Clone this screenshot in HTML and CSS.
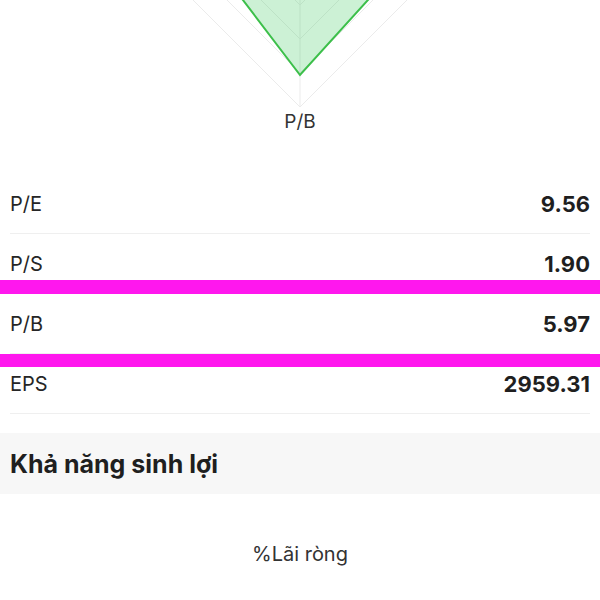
FILE: index.html
```html
<!DOCTYPE html>
<html lang="vi">
<head>
  <meta charset="UTF-8">
  <meta name="viewport" content="width=device-width, initial-scale=1.0">
  <title>Định giá</title>
  <link rel="stylesheet" href="styles.css">
</head>
<body>

  <!-- Radar chart (only the lower part is on screen) -->
  <section class="radar">
    <svg class="radar-svg" width="600" height="110" viewBox="0 0 600 110">
      <!-- grid: centre at (300,-63), 5 rings of 34px -->
      <g class="radar-grid">
        <polygon points="300,-97 334,-63 300,-29 266,-63" />
        <polygon points="300,-131 368,-63 300,5 232,-63" />
        <polygon points="300,-165 402,-63 300,39 198,-63" />
        <polygon points="300,-199 436,-63 300,73 164,-63" />
        <polygon points="300,-233 470,-63 300,107 130,-63" />
        <line x1="300" y1="-233" x2="300" y2="107" />
        <line x1="130" y1="-63" x2="470" y2="-63" />
      </g>
      <polygon class="radar-value" points="300,-163 425,-63 300,75 195,-63" />
    </svg>
    <div class="radar-label">P/B</div>
  </section>

  <!-- Valuation metrics -->
  <section class="metrics">
    <div class="metric-row">
      <span class="metric-name">P/E</span>
      <span class="metric-value">9.56</span>
    </div>
    <div class="metric-row">
      <span class="metric-name">P/S</span>
      <span class="metric-value">1.90</span>
    </div>
    <div class="metric-row highlighted">
      <span class="metric-name">P/B</span>
      <span class="metric-value">5.97</span>
    </div>
    <div class="metric-row">
      <span class="metric-name">EPS</span>
      <span class="metric-value">2959.31</span>
    </div>
  </section>

  <!-- Profitability -->
  <div class="section-header">
    <h2>Khả năng sinh lợi</h2>
  </div>

  <div class="chart-title">%Lãi ròng</div>

</body>
</html>
```

FILE: styles.css
```css
body {
  margin: 0;
  padding: 0;
  background-color: #fff;
  font-family: 'Inter', 'Roboto', sans-serif;
  color: #222;
  overflow: hidden;
}

/* Radar chart */
.radar-svg {
  display: block;
}

.radar-grid polygon,
.radar-grid line {
  fill: none;
  stroke: #ebebeb;
  stroke-width: 1;
}

.radar-value {
  fill: rgba(52, 199, 89, 0.25);
  stroke: #3cbf4a;
  stroke-width: 2;
  stroke-linejoin: miter;
}

.radar-label {
  text-align: center;
  font-size: 19px;
  line-height: 24px;
  color: #333;
}

/* Metric rows */
.metrics {
  margin-top: 40px;
}

.metric-row {
  display: flex;
  justify-content: space-between;
  align-items: center;
  height: 59px;
  margin: 0 10px;
  border-bottom: 1px solid #efefef;
  font-size: 20px;
}

.metric-name {
  color: #262626;
}

.metric-value {
  font-size: 22px;
  font-weight: 700;
  color: #1f1f1f;
}

/* magenta marker bars around the selected row */
.metric-row.highlighted {
  position: relative;
}

.metric-row.highlighted::before,
.metric-row.highlighted::after {
  content: '';
  position: absolute;
  left: -10px;
  right: -10px;
  height: 14px;
  background-color: #ff17ee;
}

.metric-row.highlighted::before {
  top: -14px;
}

.metric-row.highlighted::after {
  top: 60px;
  height: 13px;
}

/* Section header */
.section-header {
  margin-top: 19px;
  height: 61px;
  background-color: #f7f7f7;
  display: flex;
  align-items: center;
  padding: 0 10px;
}

.section-header h2 {
  margin: 0;
  font-size: 25px;
  font-weight: 700;
  color: #1f1f1f;
}

.chart-title {
  margin-top: 48px;
  text-align: center;
  font-size: 20px;
  line-height: 24px;
  color: #333;
}
```
